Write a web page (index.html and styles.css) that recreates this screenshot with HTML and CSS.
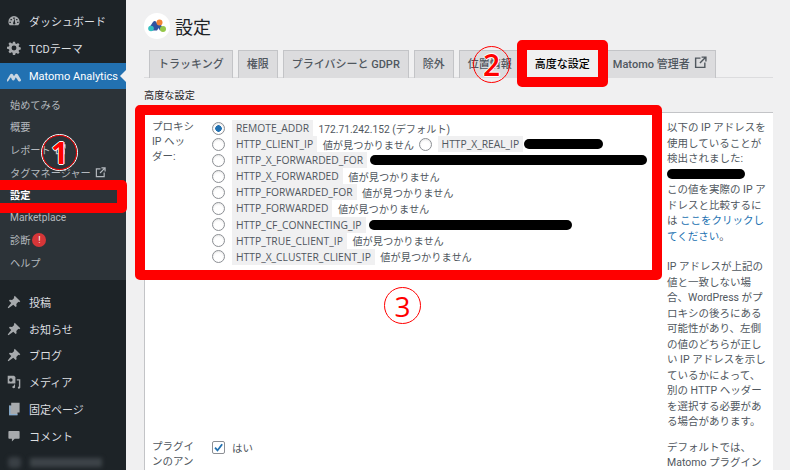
FILE: index.html
```html
<!DOCTYPE html>
<html lang="ja">
<head>
<meta charset="utf-8">
<title>設定</title>
<link rel="stylesheet" href="styles.css">
</head>
<body>
<div class="page">
  <aside class="sidebar">
    <ul class="menu top">
      <li><svg class="ico" viewBox="0 0 20 20"><path d="M10 3a8 8 0 0 0-8 8c0 2 .7 3.800 2 5h12c1.300-1.200 2-3 2-5a8 8 0 0 0-8-8zM9 5h2v2H9zM5 7h2v2H5zm8 0h2v2h-2zM3.500 11h2v2h-2zm11 0h2v2h-2zM11 6l.5 6a1.700 1.700 0 1 1-2.500.2z" fill="#a7aaad" fill-rule="evenodd"/></svg>ダッシュボード</li>
      <li><svg class="ico" viewBox="0 0 20 20"><path d="M8.500 1h3l.5 2.500 1.600.7 2.200-1.400 2.100 2.100-1.400 2.200.7 1.600 2.500.5v3l-2.500.5-.7 1.600 1.400 2.200-2.100 2.100-2.200-1.400-1.600.7-.5 2.500h-3L8 16.900l-1.600-.7-2.200 1.400-2.100-2.100 1.400-2.200-.7-1.600L0 11.200v-3l2.800-.5.7-1.600-1.400-2.200 2.100-2.100 2.200 1.400L8 3.500zM10 6.500a3.500 3.500 0 1 0 0 7 3.500 3.500 0 0 0 0-7z" fill="#a7aaad" fill-rule="evenodd"/></svg>TCDテーマ</li>
      <li class="active"><svg class="ico" viewBox="0 0 20 20"><path d="M0 15.500l4.500-7.500c1-1.500 3-1.500 4 0l1.500 2.500 1.500-2.500c1-1.500 3-1.500 4 0l4.500 7.500c.5 1.800-1.500 3-3 2.200-1-.5-1.500-1.500-2-2.300l-2.500-3.500-1.500 3c-1 1.900-3 1.900-4 0l-1.500-3-2.500 3.500c-.5.800-1 1.800-2 2.300-1.500.8-3.500-.4-3-2.200z" fill="#c9d6e2"/></svg>Matomo Analytics</li>
    </ul>
    <ul class="menu sub">
      <li>始めてみる</li>
      <li>概要</li>
      <li>レポート <svg class="ext" viewBox="0 0 12 12"><path d="M6 2H1.500v8.500H10V6M7 1h4v4M11 1L5.500 6.500" fill="none" stroke="currentColor" stroke-width="1.300"/></svg></li>
      <li>タグマネージャー <svg class="ext" viewBox="0 0 12 12"><path d="M6 2H1.500v8.500H10V6M7 1h4v4M11 1L5.500 6.500" fill="none" stroke="currentColor" stroke-width="1.300"/></svg></li>
      <li class="current">設定</li>
      <li>Marketplace</li>
      <li>診断<span class="badge">!</span></li>
      <li>ヘルプ</li>
    </ul>
    <ul class="menu lower">
      <li><svg class="ico" viewBox="0 0 20 20"><path d="M11 1l8 8-1.500 1.200-1.200-.5-3 3 .4 3.300-1.300 1.300-3.400-3.400L2 19l-1-1 5.100-6.600L2.800 8.200 4 6.800l3.300.5 3-3-.5-1.200z" fill="#a7aaad"/></svg>投稿</li>
      <li><svg class="ico" viewBox="0 0 20 20"><path d="M11 1l8 8-1.500 1.200-1.200-.5-3 3 .4 3.300-1.300 1.300-3.400-3.400L2 19l-1-1 5.100-6.600L2.800 8.200 4 6.800l3.300.5 3-3-.5-1.200z" fill="#a7aaad"/></svg>お知らせ</li>
      <li><svg class="ico" viewBox="0 0 20 20"><path d="M11 1l8 8-1.500 1.200-1.200-.5-3 3 .4 3.300-1.300 1.300-3.400-3.400L2 19l-1-1 5.100-6.600L2.800 8.200 4 6.800l3.300.5 3-3-.5-1.200z" fill="#a7aaad"/></svg>ブログ</li>
      <li><svg class="ico" viewBox="0 0 20 20"><path d="M1 1h9l2 2v9H1zm4.500 3.500a2.500 2.500 0 1 0 0 5 2.500 2.500 0 0 0 0-5zM14 6h5v12c0 1.500-2 2-3 1.200-1-.8-.5-2.500 1-2.700V8h-3zM10 13.500v2c-1.500 0-2.800 1-2.300 2.400.5 1.200 2.800 1.300 3.800 0V13.500z" fill="#a7aaad" fill-rule="evenodd"/></svg>メディア</li>
      <li><svg class="ico" viewBox="0 0 20 20"><path d="M6 1h12v14h-3v4H3V5h3z" fill="#a7aaad"/><path d="M3 5h2v12h10v2H3z" fill="#72aee6" opacity=".6"/></svg>固定ページ</li>
      <li><svg class="ico" viewBox="0 0 20 20"><path d="M3 3h14a1 1 0 0 1 1 1v9a1 1 0 0 1-1 1h-6l-4 4v-4H3a1 1 0 0 1-1-1V4a1 1 0 0 1 1-1z" fill="#a7aaad"/></svg>コメント</li>
      <li class="blurred"><span class="blur-ico"></span><span class="blur-text"></span></li>
    </ul>
  </aside>

  <main class="main">
    <header class="title">
      <span class="logo"><svg viewBox="0 0 26 26" width="26" height="26"><circle cx="13" cy="13" r="13" fill="#fff"/><path d="M5 15l4-6c1-1.300 2.500-1.200 3.300 0l3 5-2.300 3.500H7z" fill="#3152a0"/><circle cx="7" cy="15.500" r="2.800" fill="#35bfc0"/><path d="M12 11l3-2 4.500 7-3.500 1.500z" fill="#3152a0"/><circle cx="15.500" cy="9.500" r="3" fill="#f38334"/><circle cx="19" cy="16" r="3" fill="#95c748"/></svg></span>
      <h1>設定</h1>
    </header>
    <nav class="tabs">
      <a class="tab">トラッキング</a>
      <a class="tab">権限</a>
      <a class="tab">プライバシーと GDPR</a>
      <a class="tab">除外</a>
      <a class="tab">位置情報</a>
      <a class="tab on">高度な設定</a>
      <a class="tab">Matomo 管理者 <svg class="ext big" viewBox="0 0 12 12"><path d="M6 2H1.500v8.500H10V6M7 1h4v4M11 1L5.500 6.500" fill="none" stroke="currentColor" stroke-width="1.300"/></svg></a>
    </nav>
    <h2 class="section">高度な設定</h2>
    <section class="panel">
      <div class="row">
        <div class="label">プロキシ IP ヘッダー:</div>
        <div class="field">
          <div class="opt"><span class="radio sel"></span><code>REMOTE_ADDR</code> 172.71.242.152 (デフォルト)</div>
          <div class="opt"><span class="radio"></span><code>HTTP_CLIENT_IP</code> 値が見つかりません <span class="radio inl"></span><code>HTTP_X_REAL_IP</code><span class="mask w79"></span></div>
          <div class="opt"><span class="radio"></span><code>HTTP_X_FORWARDED_FOR</code><span class="mask w277"></span></div>
          <div class="opt"><span class="radio"></span><code>HTTP_X_FORWARDED</code> 値が見つかりません</div>
          <div class="opt"><span class="radio"></span><code>HTTP_FORWARDED_FOR</code> 値が見つかりません</div>
          <div class="opt"><span class="radio"></span><code>HTTP_FORWARDED</code> 値が見つかりません</div>
          <div class="opt"><span class="radio"></span><code>HTTP_CF_CONNECTING_IP</code><span class="mask w203"></span></div>
          <div class="opt"><span class="radio"></span><code>HTTP_TRUE_CLIENT_IP</code> 値が見つかりません</div>
          <div class="opt"><span class="radio"></span><code>HTTP_X_CLUSTER_CLIENT_IP</code> 値が見つかりません</div>
        </div>
        <div class="help">
          <p>以下の IP アドレスを使用していることが検出されました:<br><span class="mask w78"></span><br>この値を実際の IP アドレスと比較するには <a>ここをクリックしてください</a>。</p>
          <p class="last">IP アドレスが上記の値と一致しない場合、WordPress がプロキシの後ろにある可能性があり、左側の値のどちらが正しい IP アドレスを示しているかによって、別の HTTP ヘッダーを選択する必要がある場合があります。</p>
        </div>
      </div>
      <div class="row">
        <div class="label">プラグインのアンインストール</div>
        <div class="field"><div class="check-line"><span class="check"><svg viewBox="0 0 12 12"><path d="M2.200 6.200l2.700 3L10 2.500" fill="none" stroke="#2271b1" stroke-width="2"/></svg></span>はい</div></div>
        <div class="help"><p>デフォルトでは、Matomo プラグインをアンインストールしても</p></div>
      </div>
    </section>
  </main>
</div>

<div class="mark box-side"></div>
<div class="mark box-tab"></div>
<div class="mark box-main"></div>
<div class="num n1">1</div>
<div class="num n2">2</div>
<div class="num n3">3</div>
</body>
</html>
```

FILE: styles.css
```css
* { box-sizing: border-box; }
html, body { margin: 0; height: 470px; overflow: hidden; }
body {
  position: relative;
  background: #f0f0f1;
  color: #50575e;
  font-family: Roboto, "Noto Sans CJK JP", sans-serif;
  font-size: 10.500px;
}
.page { display: flex; height: 470px; overflow: hidden; }

/* sidebar */
.sidebar { width: 126px; flex: none; background: #1d2327; color: #dcdfe1; }
.menu { list-style: none; margin: 0; padding: 0; }
.menu li { display: flex; align-items: center; white-space: nowrap; }
.top { padding-top: 7px; }
.top li, .lower li { height: 27px; padding-left: 7px; font-size: 11px; }
.lower li { height: 26.800px; }
.top li.active { height: 26px; margin-top: 2px; background: #2271b1; color: #fff; position: relative; }
.top li.active::after {
  content: ""; position: absolute; right: 0; top: 7px;
  border: 6px solid transparent; border-right-color: #f0f0f1; border-left-width: 0;
}
.ico { width: 14px; height: 14px; margin-right: 8px; flex: none; }
.sub { background: #2c3338; color: #b4b9be; padding: 4px 0 7px; height: 191px; }
.sub li { height: 22.600px; padding-left: 10px; font-size: 10.200px; }
.sub li.current { color: #fff; font-weight: 700; }
.ext { width: 11px; height: 11px; margin-left: 4px; }
.ext.big { width: 13px; height: 13px; vertical-align: -2px; margin-left: 4px; }
.badge {
  display: inline-flex; align-items: center; justify-content: center;
  width: 14px; height: 14px; margin-left: 2px; border-radius: 50%;
  background: #d63638; color: #fff; font-size: 9px;
}
.lower { padding-top: 8.500px; }
.blur-ico { width: 13px; height: 11px; background: #3a4045; border-radius: 4px; margin: 0 9px 0 1px; filter: blur(2px); }
.blur-text { width: 72px; height: 9px; background: #3e4449; filter: blur(2px); }

/* main */
.main { flex: 1; min-width: 0; padding: 12px 17px 0 18px; }
.title { display: flex; align-items: center; height: 27px; }
.logo { display: flex; }
.title h1 { margin: 0 0 0 5px; font-size: 18px; font-weight: 400; color: #1d2327; }
.tabs {
  display: flex; gap: 5px; margin-top: 11px; height: 28px;
  padding-left: 5px; border-bottom: 1px solid #dcdcde;
}
.tab {
  display: flex; align-items: center; height: 28px; padding: 0 8px 4px;
  background: #dcdcde; border: 1px solid #c3c4c7; border-bottom: 0;
  font-weight: 500; font-size: 11px; white-space: nowrap; color: #50575e;
}
.tab.on { background: #f0f0f1; color: #000; border-color: #f0f0f1; }
.section { margin: 10px 0 0; height: 24px; font-size: 10.200px; line-height: 15px; font-weight: 400; color: #1d2327; }
.panel { background: #fff; border: 1px solid #c3c4c7; border-width: 1px 0 0 1px; height: 400px; padding: 7px 0 0 7px; }
.row { display: flex; }
.label { width: 60px; padding-right: 17px; flex: none; line-height: 15px; margin-top: -1px; }
.field { width: 455px; flex: none; }
.opt { height: 16.100px; display: flex; align-items: center; white-space: pre; font-size: 10.200px; }
.radio {
  width: 13px; height: 13px; flex: none; margin-right: 7px;
  border: 1px solid #8c8f94; border-radius: 50%; background: #fff;
  box-shadow: inset 0 1px 2px rgba(0,0,0,.1);
}
.radio.inl { margin-left: 2px; margin-right: 6px; }
.radio.sel { background: radial-gradient(circle, #2271b1 0 3px, #fff 3.500px); }
code {
  display: inline-block; height: 16.100px; line-height: 16.100px; padding: 0 4px; margin-right: 3px;
  background: #f0f0f1; color: #50575e; font-family: "Open Sans", sans-serif; font-size: 10.300px;
}
.mask { display: inline-block; height: 10px; background: #000; border-radius: 5px; }
.w79 { width: 79px; margin-left: -2px; }
.w277 { width: 277px; }
.w203 { width: 203px; }
.w78 { width: 78px; vertical-align: -1px; }
.help { width: 100px; flex: none; font-size: 10.500px; line-height: 15.500px; }
.help p { margin: 0 0 15px; }
.help p.last { margin-bottom: 10px; }
.help a { color: #2271b1; }
.check-line { display: flex; align-items: center; gap: 7px; height: 16px; }
.check { width: 13px; height: 13px; border: 1px solid #8c8f94; border-radius: 2px; display: flex; background: #fff; }
.check svg { width: 11px; height: 11px; }

/* annotations */
.mark { position: absolute; border: 10px solid #f00; border-radius: 5px; }
.box-side { left: -10px; top: 180px; width: 137px; height: 33px; }
.box-tab { left: 517px; top: 40px; width: 91px; height: 47px; }
.box-main { left: 135px; top: 105px; width: 527px; height: 175px; }
.num {
  position: absolute; display: flex; align-items: center; justify-content: center;
  width: 37px; height: 37px; border: 1px solid #f00; border-radius: 50%; color: #f00;
  font-family: "Open Sans", sans-serif;
}
.n1 { left: 41px; top: 134px; font-size: 30px; font-weight: 700; border-color: #fff; outline: 1px solid #f00; outline-offset: -2px; text-shadow: 1px 0 #fff, -1px 0 #fff, 0 1px #fff, 0 -1px #fff; }
.n2 { left: 473px; top: 46px; font-size: 30px; font-weight: 600; text-shadow: 1px 0 #fff, -1px 0 #fff, 0 1px #fff, 0 -1px #fff; }
.n3 { left: 384px; top: 287px; font-size: 28px; }
```
